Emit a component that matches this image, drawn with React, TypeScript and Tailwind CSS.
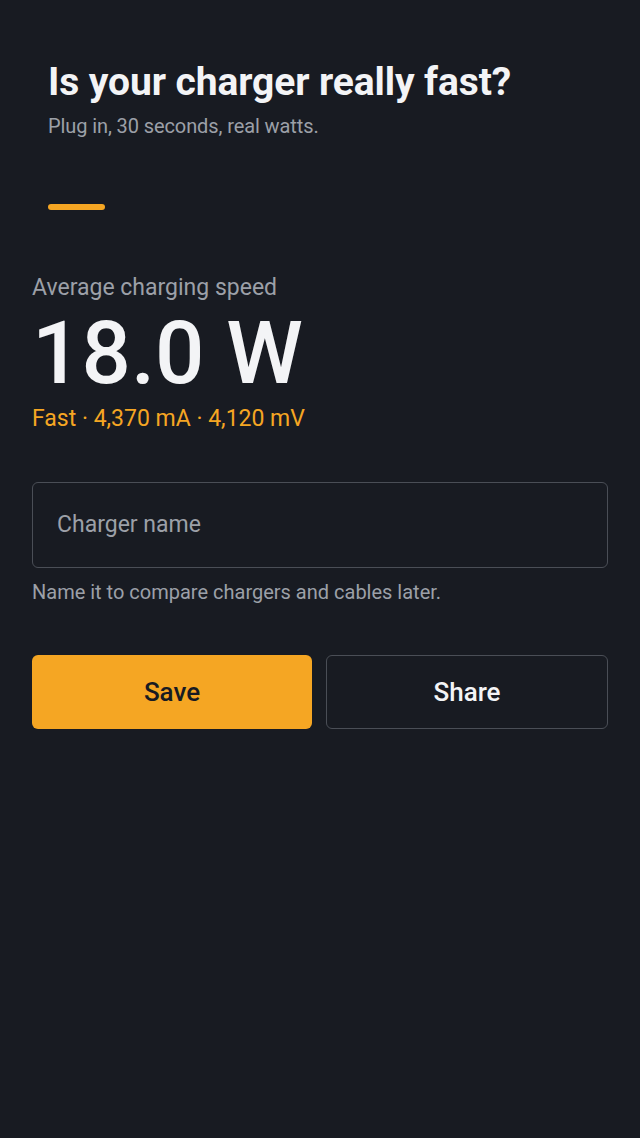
export default function App() {
  return (
    <div
      className="min-h-[1138px] w-full bg-[#181b22] text-white"
      style={{ fontFamily: "Roboto, 'Noto Sans', sans-serif" }}
    >
      <div className="px-12 pt-[60px]">
        <h1 className="text-[39px] font-bold leading-[44px] tracking-[-0.1px] text-[#f3f4f6]">
          Is your charger really fast?
        </h1>
        <p className="mt-[10px] text-[20px] leading-[24px] tracking-[-0.1px] text-[#9ca0a8]">
          Plug in, 30 seconds, real watts.
        </p>
        <div className="mt-[66px] h-[6px] w-[57px] rounded-full bg-[#f5a623]" />
      </div>
      <div className="px-8 pt-[64px]">
        <div className="text-[23px] leading-[28px] text-[#9ca0a8]">Average charging speed</div>
        <div className="mt-[3px] text-[87px] font-medium leading-[96px] text-[#f3f4f6]">18.0 W</div>
        <div className="mt-[4px] text-[23px] leading-[28px] text-[#f5a623]">
          Fast · 4,370 mA · 4,120 mV
        </div>
        <div className="mt-[49px] flex h-[86px] items-center rounded-[6px] border-[1.5px] border-[#4a4e56] px-6">
          <span className="text-[23px] text-[#9ca0a8]">Charger name</span>
        </div>
        <div className="mt-[12px] text-[20px] leading-[24px] text-[#9ca0a8]">
          Name it to compare chargers and cables later.
        </div>
        <div className="mt-[51px] flex gap-[14px]">
          <button className="flex h-[74px] flex-1 items-center justify-center rounded-[6px] bg-[#f5a623] text-[26px] font-medium text-[#181b22]">
            Save
          </button>
          <button className="flex h-[74px] flex-1 items-center justify-center rounded-[6px] border-[1.5px] border-[#4a4e56] text-[26px] font-medium text-[#f3f4f6]">
            Share
          </button>
        </div>
      </div>
    </div>
  );
}
